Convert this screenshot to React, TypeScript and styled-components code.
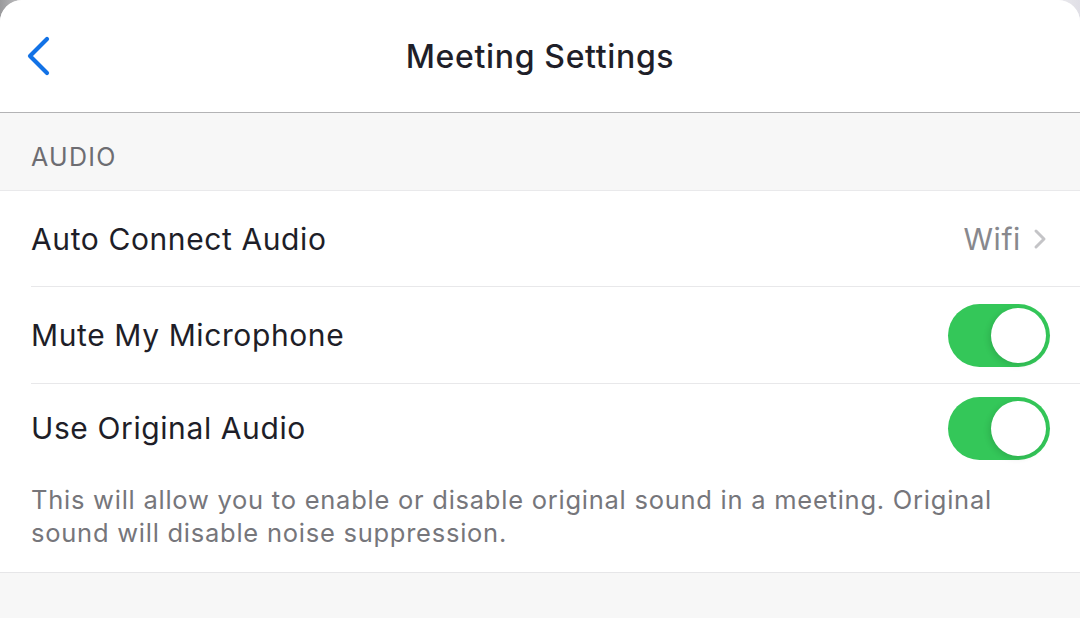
import styled, { createGlobalStyle } from "styled-components";

const GlobalStyle = createGlobalStyle`
    html, body {
        margin: 0;
        padding: 0;
        height: 100%;
        background: linear-gradient(90deg, #9a9a9c 0%, #e6e6e8 4%, #f4f4f4 96%, #e0dfe6 100%);
        font-family: Inter, "Noto Sans", sans-serif;
        -webkit-font-smoothing: antialiased;
    }
    #root {
        height: 100%;
    }
`;

const Sheet = styled.div`
    height: 618px;
    width: 100%;
    background: #f7f7f7;
    border-radius: 22px 22px 0 0;
    overflow: hidden;
    display: flex;
    flex-direction: column;
`;

const Header = styled.header`
    height: 112px;
    flex-shrink: 0;
    background: #ffffff;
    border-bottom: 1px solid #b3b3b5;
    display: grid;
    grid-template-columns: 120px 1fr 120px;
    align-items: center;
`;

const BackButton = styled.button`
    border: none;
    background: none;
    padding: 0 0 0 24px;
    display: flex;
    align-items: center;
    justify-self: start;
    cursor: pointer;
`;

const Title = styled.h1`
    margin: 0;
    text-align: center;
    font-size: 32px;
    font-weight: 500;
    color: #1f1f29;
    letter-spacing: 0.65px;
`;

const SectionLabel = styled.div`
    height: 78px;
    padding: 10px 31px 0;
    box-sizing: border-box;
    display: flex;
    align-items: center;
    font-size: 25px;
    letter-spacing: 1.3px;
    color: #6d6d72;
    border-bottom: 1px solid #e9e9eb;
`;

const Group = styled.section`
    background: #ffffff;
    border-bottom: 1px solid #e6e6e8;
`;

const Row = styled.div<{ $height: number; $divider?: boolean }>`
    height: ${(p) => p.$height}px;
    margin-left: 31px;
    padding-right: 30px;
    display: flex;
    align-items: center;
    justify-content: space-between;
    border-bottom: ${(p) => (p.$divider ? "1px solid #e8e8ea" : "none")};
`;

const RowLabel = styled.span`
    font-size: 30px;
    color: #1e1e28;
    letter-spacing: 0.6px;
`;

const Value = styled.span`
    display: flex;
    align-items: center;
    gap: 12px;
    font-size: 30px;
    letter-spacing: 0.6px;
    color: #88888d;
    padding-right: 3px;
`;

const Track = styled.div<{ $on: boolean }>`
    width: 102px;
    height: 63px;
    border-radius: 32px;
    background: ${(p) => (p.$on ? "#34c759" : "#e9e9ea")};
    position: relative;
`;

const Knob = styled.div<{ $on: boolean }>`
    position: absolute;
    top: 4px;
    left: ${(p) => (p.$on ? "43px" : "4px")};
    width: 55px;
    height: 55px;
    border-radius: 50%;
    background: #ffffff;
    box-shadow: -2px 2px 6px rgba(0, 0, 0, 0.12);
`;

const Note = styled.p`
    margin: 0;
    padding: 11px 60px 23px 31px;
    font-size: 25.5px;
    letter-spacing: 0.75px;
    line-height: 33px;
    color: #76767b;
`;

const Toggle = ({ on }: { on: boolean }) => (
    <Track $on={on}>
        <Knob $on={on} />
    </Track>
);

const App = () => {
    return (
        <>
            <GlobalStyle />
            <Sheet>
                <Header>
                    <BackButton aria-label="Back">
                        <svg width="28" height="42" viewBox="0 0 28 42">
                            <path d="M23 4 L6 21 L23 38" fill="none" stroke="#1272e6" strokeWidth="4.2" strokeLinecap="round" strokeLinejoin="round" />
                        </svg>
                    </BackButton>
                    <Title>Meeting Settings</Title>
                    <div />
                </Header>
                <SectionLabel>AUDIO</SectionLabel>
                <Group>
                    <Row $height={95} $divider>
                        <RowLabel>Auto Connect Audio</RowLabel>
                        <Value>
                            Wifi
                            <svg width="14" height="22" viewBox="0 0 14 22">
                                <path d="M3 3 L11 11 L3 19" fill="none" stroke="#c4c4c7" strokeWidth="3" strokeLinecap="round" strokeLinejoin="round" />
                            </svg>
                        </Value>
                    </Row>
                    <Row $height={96} $divider>
                        <RowLabel>Mute My Microphone</RowLabel>
                        <Toggle on />
                    </Row>
                    <Row $height={88}>
                        <RowLabel>Use Original Audio</RowLabel>
                        <Toggle on />
                    </Row>
                    <Note>
                        This will allow you to enable or disable original sound in a meeting. Original sound will disable noise suppression.
                    </Note>
                </Group>
            </Sheet>
        </>
    );
};

export default App;
